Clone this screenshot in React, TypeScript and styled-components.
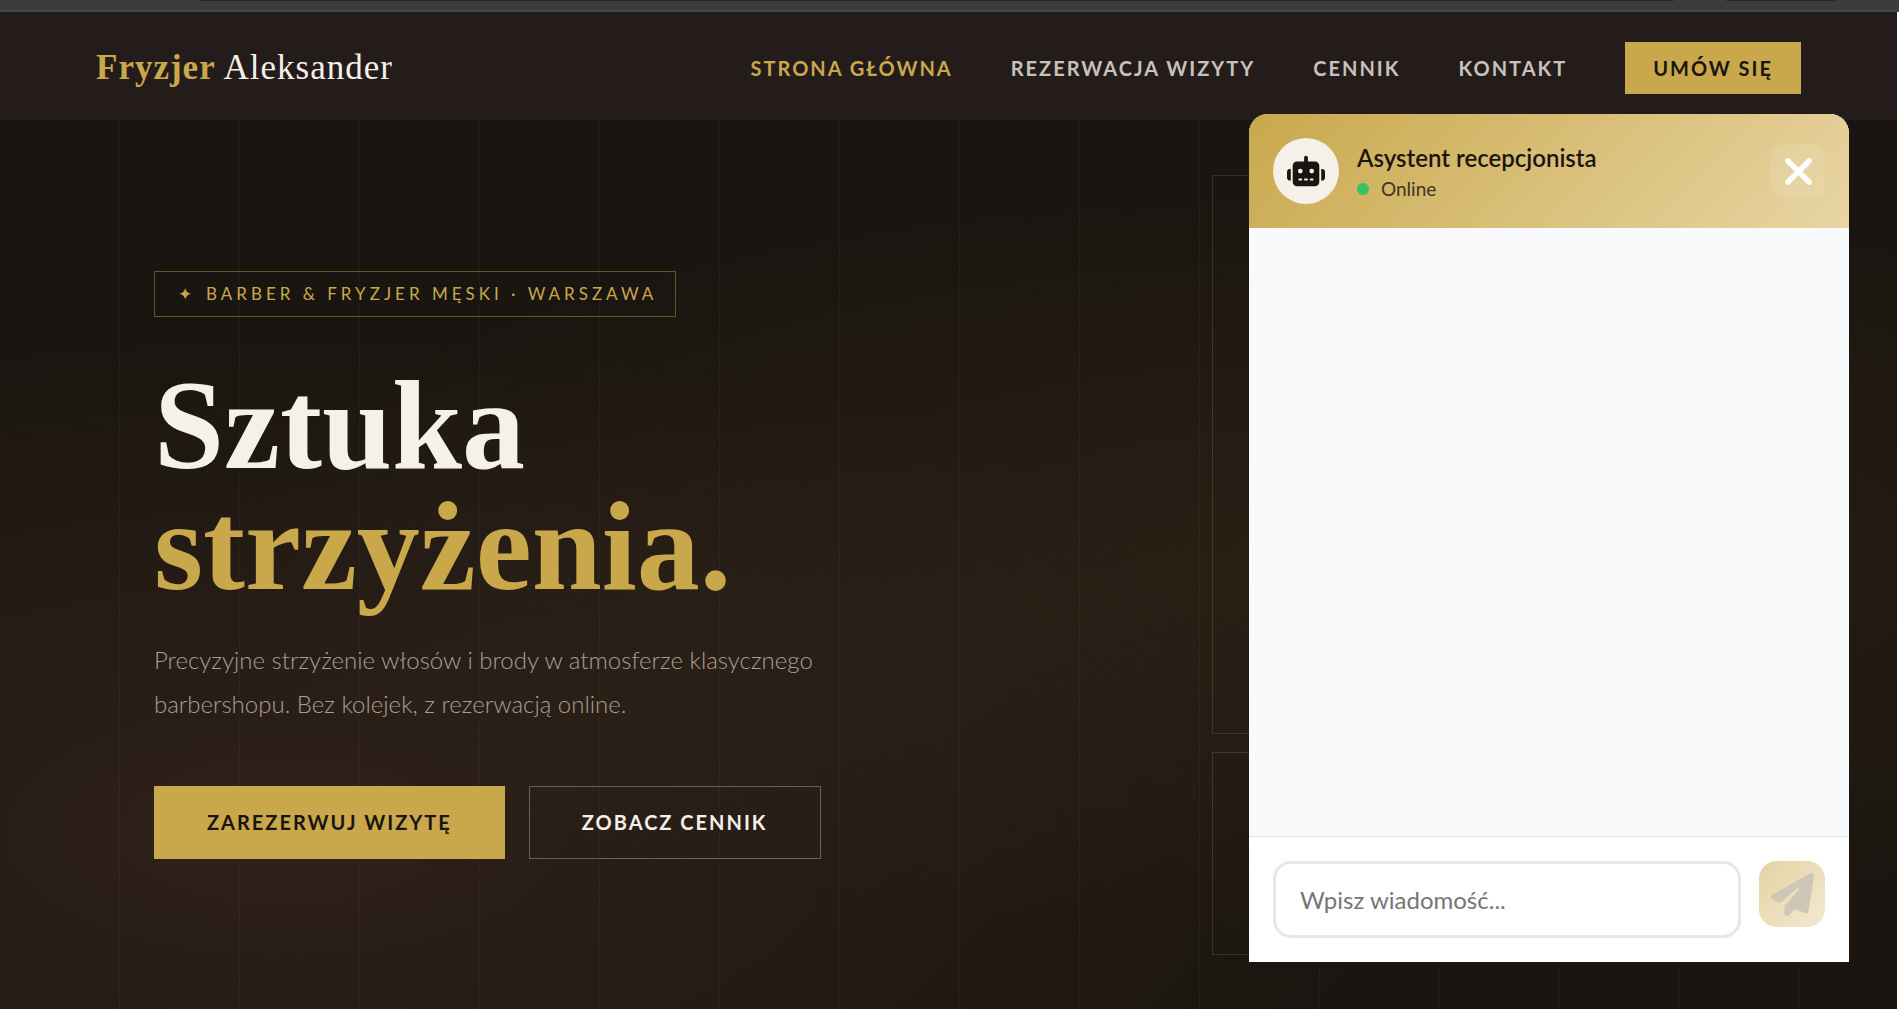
import React from "react";
import styled, { createGlobalStyle } from "styled-components";
import { FaPaperPlane, FaRobot, FaXmark } from "react-icons/fa6";

const gold = "#c9a84c";
const cream = "#f5f0e8";
const ink = "#1a1510";
const sans = `"Lato", "Noto Sans", sans-serif`;
const serif = `"Liberation Serif", serif`;

const GlobalStyle = createGlobalStyle`
  *, *::before, *::after { box-sizing: border-box; }
  body { margin: 0; background: #ffffff; font-family: ${sans}; }
  h1, h2, p { margin: 0; }
  button, input { font-family: inherit; }
`;

const Page = styled.div`
  display: flex;
  flex-direction: column;
  min-height: 100vh;
`;

const BrowserEdge = styled.div`
  display: flex;
  gap: 52px;
  height: 12px;
  padding: 0 63px 0 200px;
  background: #3c3c3c;
  border-bottom: 2px solid #474747;
`;

const EdgeTab = styled.span<{ $grow?: boolean }>`
  flex: ${(p) => (p.$grow ? "1" : "0 0 110px")};
  height: 1px;
  background: #282828;
`;

const Site = styled.div`
  flex: 1;
  display: flex;
  flex-direction: column;
  margin: 0 2px 1px 0;
  background: ${ink};
`;

const Header = styled.header`
  display: flex;
  align-items: center;
  justify-content: space-between;
  height: 108px;
  padding: 4px 96px 0;
  background: #241c1a;
`;

const Logo = styled.a`
  color: ${cream};
  font-family: ${serif};
  font-size: 35px;
  line-height: 44px;
  letter-spacing: 1px;
  text-decoration: none;

  strong {
    color: ${gold};
    font-weight: 700;
  }
`;

const Nav = styled.nav`
  display: flex;
  align-items: center;
  gap: 58px;
`;

const NavLink = styled.a<{ $active?: boolean }>`
  color: ${(p) => (p.$active ? gold : "#c8c1bc")};
  font-size: 20px;
  font-weight: 700;
  line-height: 24px;
  letter-spacing: 2px;
  text-decoration: none;
  text-transform: uppercase;
`;

const BookLink = styled(NavLink)`
  padding: 14px 28px;
  background: ${gold};
  color: ${ink};
`;

const Hero = styled.main`
  flex: 1;
  display: grid;
  grid-template-columns: minmax(0, 1fr) 531px;
  align-items: center;
  padding: 48px 154px;
  background:
    repeating-linear-gradient(90deg, transparent 0 119px, rgba(201, 168, 76, 0.04) 119px 120px),
    radial-gradient(ellipse at 15% 80%, rgba(139, 90, 70, 0.18) 0%, transparent 50%),
    radial-gradient(ellipse at 70% 50%, rgba(201, 168, 76, 0.08) 0%, transparent 60%),
    ${ink};
`;

const Intro = styled.section`
  display: flex;
  flex-direction: column;
  align-items: flex-start;
`;

const Tag = styled.p`
  display: flex;
  gap: 10px;
  padding: 10px 18px 10px 23px;
  border: 1px solid #66522a;
  color: ${gold};
  font-size: 17px;
  line-height: 24px;
  letter-spacing: 4px;
  text-transform: uppercase;
`;

const Title = styled.h1`
  margin-top: 48px;
  color: ${cream};
  font-family: ${serif};
  font-size: 126px;
  font-weight: 700;
  line-height: 121px;

  em {
    display: block;
    color: ${gold};
    font-style: normal;
  }
`;

const Lead = styled.p`
  max-width: 680px;
  margin-top: 31px;
  color: #a89f96;
  font-size: 24px;
  font-weight: 300;
  line-height: 44px;
`;

const Actions = styled.div`
  display: flex;
  gap: 24px;
  margin-top: 60px;
`;

const ActionLink = styled.a<{ $outline?: boolean }>`
  padding: 24px 52px;
  border: 1px solid ${(p) => (p.$outline ? "#6a6159" : gold)};
  background: ${(p) => (p.$outline ? "transparent" : gold)};
  color: ${(p) => (p.$outline ? cream : ink)};
  font-size: 20px;
  font-weight: 700;
  line-height: 23px;
  letter-spacing: 2px;
  text-decoration: none;
  text-transform: uppercase;
`;

const Frames = styled.div`
  display: flex;
  flex-direction: column;
  gap: 18px;
`;

const Frame = styled.div<{ $height: number }>`
  height: ${(p) => p.$height}px;
  border: 1px solid rgba(201, 168, 76, 0.2);
`;

const Chat = styled.aside`
  position: fixed;
  right: 50px;
  bottom: 48px;
  display: flex;
  flex-direction: column;
  width: 600px;
  height: min(848px, calc(100vh - 96px));
  overflow: hidden;
  border-radius: 19px 19px 0 0;
  background: #ffffff;
`;

const ChatHeader = styled.header`
  display: flex;
  align-items: center;
  gap: 18px;
  padding: 24px;
  background: linear-gradient(135deg, ${gold} 0%, #e8d5a3 100%);
`;

const Avatar = styled.span`
  display: grid;
  place-items: center;
  width: 66px;
  height: 66px;
  border-radius: 50%;
  background: ${cream};
  color: ${ink};
  font-size: 38px;
`;

const ChatHeading = styled.div`
  flex: 1;
  padding-top: 2px;
`;

const ChatTitle = styled.h2`
  color: ${ink};
  font-size: 24px;
  font-weight: 600;
  line-height: 34px;
`;

const Status = styled.p`
  display: flex;
  align-items: center;
  gap: 12px;
  color: #3d3420;
  font-size: 19px;
  line-height: 28px;

  &::before {
    content: "";
    width: 12px;
    height: 12px;
    border-radius: 50%;
    background: #34c560;
  }
`;

const IconButton = styled.button`
  display: grid;
  place-items: center;
  padding: 0;
  border: 0;
  font-size: 43px;
`;

const CloseButton = styled(IconButton)`
  width: 54px;
  height: 54px;
  border-radius: 14px;
  background: rgba(255, 255, 255, 0.1);
  color: #ffffff;
`;

const Messages = styled.div`
  flex: 1;
  background: #f9fafc;
`;

const Composer = styled.form`
  display: flex;
  align-items: flex-start;
  gap: 18px;
  padding: 24px;
  border-top: 1px solid #e2e8f0;
`;

const MessageInput = styled.input`
  flex: 1;
  min-width: 0;
  height: 77px;
  padding: 0 24px;
  border: 3px solid #e2e8f0;
  border-radius: 18px;
  background: #ffffff;
  color: ${ink};
  font-size: 24px;

  &::placeholder {
    color: #757575;
    opacity: 1;
  }
`;

const SendButton = styled(IconButton)`
  width: 66px;
  height: 66px;
  border-radius: 18px;
  background: linear-gradient(135deg, ${gold} 0%, #e8d5a3 100%);
  color: #a09070;
  opacity: 0.5;
`;

const links = ["Rezerwacja wizyty", "Cennik", "Kontakt"];

export default function App() {
  return (
    <>
      <GlobalStyle />
      <Page>
        <BrowserEdge>
          <EdgeTab $grow />
          <EdgeTab />
        </BrowserEdge>
        <Site>
          <Header>
            <Logo href="#">
              <strong>Fryzjer</strong> Aleksander
            </Logo>
            <Nav>
              <NavLink href="#" $active>
                Strona główna
              </NavLink>
              {links.map((label) => (
                <NavLink key={label} href="#">
                  {label}
                </NavLink>
              ))}
              <BookLink href="#">Umów się</BookLink>
            </Nav>
          </Header>
          <Hero>
            <Intro>
              <Tag>
                <span>✦</span>
                <span>Barber &amp; Fryzjer męski · Warszawa</span>
              </Tag>
              <Title>
                Sztuka <em>strzyżenia.</em>
              </Title>
              <Lead>
                Precyzyjne strzyżenie włosów i brody w atmosferze klasycznego barbershopu. Bez
                kolejek, z rezerwacją online.
              </Lead>
              <Actions>
                <ActionLink href="#">Zarezerwuj wizytę</ActionLink>
                <ActionLink href="#" $outline>
                  Zobacz cennik
                </ActionLink>
              </Actions>
            </Intro>
            <Frames>
              <Frame $height={559} />
              <Frame $height={203} />
            </Frames>
          </Hero>
        </Site>
      </Page>
      <Chat aria-label="Asystent recepcjonista">
        <ChatHeader>
          <Avatar>
            <FaRobot />
          </Avatar>
          <ChatHeading>
            <ChatTitle>Asystent recepcjonista</ChatTitle>
            <Status>Online</Status>
          </ChatHeading>
          <CloseButton type="button" aria-label="Zamknij">
            <FaXmark />
          </CloseButton>
        </ChatHeader>
        <Messages />
        <Composer onSubmit={(event) => event.preventDefault()}>
          <MessageInput type="text" placeholder="Wpisz wiadomość..." aria-label="Wiadomość" />
          <SendButton type="submit" aria-label="Wyślij" disabled>
            <FaPaperPlane />
          </SendButton>
        </Composer>
      </Chat>
    </>
  );
}
